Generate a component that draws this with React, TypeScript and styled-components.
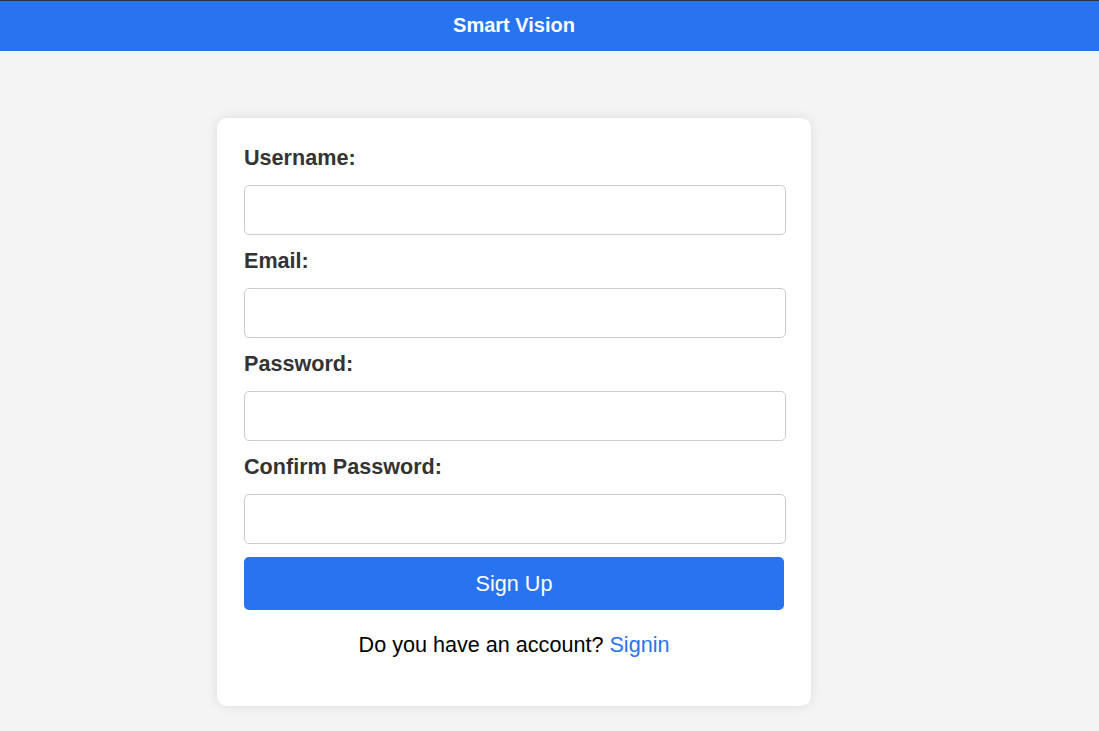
import React from "react";
import styled, { createGlobalStyle } from "styled-components";

const GlobalStyle = createGlobalStyle`
  html, body {
    margin: 0;
    padding: 0;
    background: #f4f4f4;
    font-family: "Liberation Sans", Arial, sans-serif;
  }
  * { box-sizing: border-box; }
`;

const Page = styled.div`
  min-height: 731px;
  border-top: 1px solid #333;
  background: #f4f4f4;
`;

const Header = styled.header`
  height: 50px;
  background: #2874f0;
  color: #fff;
  display: flex;
  align-items: center;
  justify-content: center;
  padding: 0 71px 2px 0;
  font-size: 20px;
  font-weight: bold;
`;

const Main = styled.main`
  display: flex;
  justify-content: center;
  padding: 67px 71px 0 0;
`;

const Card = styled.form`
  width: 594px;
  background: #fff;
  border-radius: 10px;
  box-shadow: 0 0 12px rgba(0, 0, 0, 0.1);
  padding: 26px 27px 48px;
  display: flex;
  flex-direction: column;
`;

const Label = styled.label`
  font-size: 21.6px;
  font-weight: bold;
  color: #333;
  line-height: 28px;
  margin-bottom: 13px;
`;

const Input = styled.input`
  width: calc(100% + 2px);
  height: 50px;
  border: 1px solid #ccc;
  border-radius: 5px;
  padding: 10px;
  font-size: 18px;
  margin-bottom: 12px;
  background: #fff;
`;

const Button = styled.button`
  height: 53px;
  margin-top: 1px;
  border: none;
  border-radius: 5px;
  background: #2874f0;
  color: #fff;
  font-family: "Liberation Sans", Arial, sans-serif;
  font-size: 21.6px;
  cursor: pointer;
`;

const Footer = styled.p`
  margin: 22px 0 0;
  text-align: center;
  font-size: 21.6px;
  line-height: 26px;
  color: #000;
`;

const Link = styled.a`
  color: #2874f0;
  text-decoration: none;
`;

const fields = ["Username:", "Email:", "Password:", "Confirm Password:"];

export default function App() {
  return (
    <>
      <GlobalStyle />
      <Page>
        <Header>Smart Vision</Header>
        <Main>
          <Card onSubmit={(e) => e.preventDefault()}>
            {fields.map((f) => (
              <React.Fragment key={f}>
                <Label>{f}</Label>
                <Input type={f.includes("Password") ? "password" : f === "Email:" ? "email" : "text"} />
              </React.Fragment>
            ))}
            <Button type="submit">Sign Up</Button>
            <Footer>
              Do you have an account? <Link href="#">Signin</Link>
            </Footer>
          </Card>
        </Main>
      </Page>
    </>
  );
}
